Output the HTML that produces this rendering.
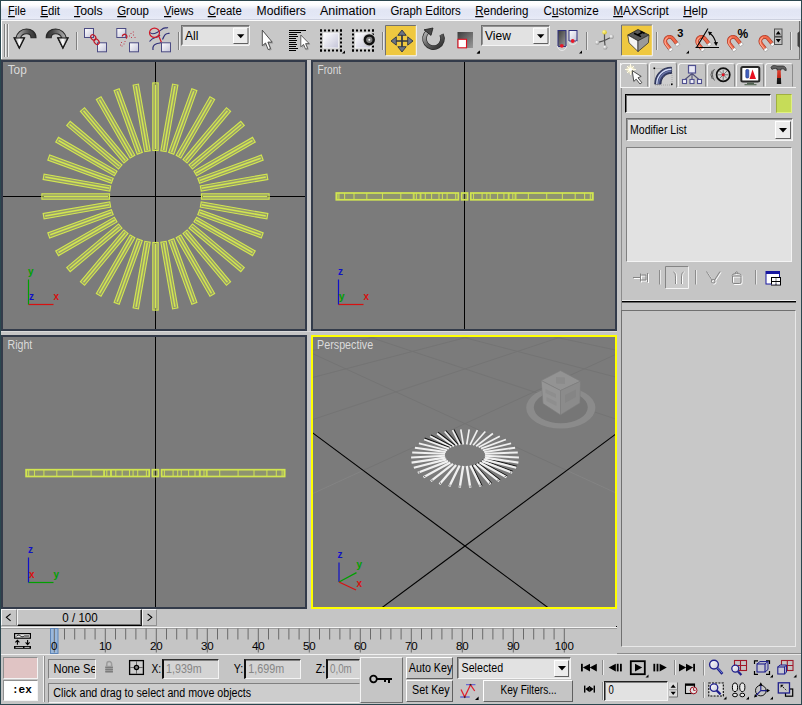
<!DOCTYPE html><html><head><meta charset="utf-8"><title>3ds Max</title><style>
*{box-sizing:border-box;margin:0;padding:0}
html,body{width:802px;height:705px;overflow:hidden;background:#c5c5c5;font-family:"Liberation Sans",sans-serif;font-size:11px;color:#000}
.a{position:absolute}
svg{position:absolute;overflow:visible}
.vp{position:absolute;background:#7b7b7b;border:2px solid #333b4a}
.vp svg{left:0;top:0}
.lbl{position:absolute;left:5px;top:2px;color:#d8d8d8;font-size:11px}
.btn{position:absolute;border:1px solid;border-color:#fff #606060 #606060 #fff;background:#c5c5c5;text-align:center;white-space:nowrap;overflow:hidden}
.sunk{position:absolute;border:1px solid;border-color:#606060 #fff #fff #606060;background:#e2e2e2;white-space:nowrap;overflow:hidden}
.vs{position:absolute;width:2px;border-left:1px solid #808080;border-right:1px solid #e8e8e8}
.t{position:absolute;white-space:nowrap}
</style></head><body>
<div class="a" style="left:0;top:0;width:802px;height:1px;background:#2b474f"></div>
<div class="a" style="left:0;top:0;width:1px;height:705px;background:#2b474f"></div>
<div class="a" style="left:801px;top:0;width:1px;height:705px;background:#2b474f"></div>
<div class="a" style="left:0;top:704px;width:802px;height:1px;background:#2b474f"></div>
<div class="a" style="left:1px;top:1px;width:800px;height:18px;background:linear-gradient(#fff 0,#fcfcfe 22%,#eceff8 38%,#e2e6f4 48%,#e3e7f5 80%,#e8ebf7 100%)"></div>
<div class="a" style="left:1px;top:19px;width:800px;height:1px;background:#ccd0de"></div>
<div class="a" style="left:1px;top:20px;width:800px;height:1px;background:#fafafa"></div>
<svg width="802" height="22" style="left:0;top:0" font-family="Liberation Sans, sans-serif" font-size="12.5" fill="#000">
<text x="8.1" y="15" textLength="17.8" lengthAdjust="spacingAndGlyphs"><tspan text-decoration="underline">F</tspan>ile</text>
<text x="40.4" y="15" textLength="19.6" lengthAdjust="spacingAndGlyphs"><tspan text-decoration="underline">E</tspan>dit</text>
<text x="74" y="15" textLength="28.7" lengthAdjust="spacingAndGlyphs"><tspan text-decoration="underline">T</tspan>ools</text>
<text x="117.2" y="15" textLength="31.8" lengthAdjust="spacingAndGlyphs"><tspan text-decoration="underline">G</tspan>roup</text>
<text x="164" y="15" textLength="29.6" lengthAdjust="spacingAndGlyphs"><tspan text-decoration="underline">V</tspan>iews</text>
<text x="207.7" y="15" textLength="34.0" lengthAdjust="spacingAndGlyphs"><tspan text-decoration="underline">C</tspan>reate</text>
<text x="256.6" y="15" textLength="49.3" lengthAdjust="spacingAndGlyphs">Modifiers</text>
<text x="320" y="15" textLength="55.6" lengthAdjust="spacingAndGlyphs">Animation</text>
<text x="390.4" y="15" textLength="70.4" lengthAdjust="spacingAndGlyphs">Graph Editors</text>
<text x="475.2" y="15" textLength="53.2" lengthAdjust="spacingAndGlyphs"><tspan text-decoration="underline">R</tspan>endering</text>
<text x="543.5" y="15" textLength="55.2" lengthAdjust="spacingAndGlyphs">C<tspan text-decoration="underline">u</tspan>stomize</text>
<text x="613.2" y="15" textLength="55.6" lengthAdjust="spacingAndGlyphs"><tspan text-decoration="underline">M</tspan>AXScript</text>
<text x="683.2" y="15" textLength="24.3" lengthAdjust="spacingAndGlyphs"><tspan text-decoration="underline">H</tspan>elp</text>
</svg>
<div class="a" style="left:1px;top:21px;width:800px;height:38px;background:#c8c8c8"></div>
<div class="a" style="left:799px;top:21px;width:1px;height:39px;background:#707070"></div>
<div class="a" style="left:1px;top:20px;width:1px;height:39px;background:#fff"></div>
<div class="a" style="left:1px;top:59px;width:799px;height:1px;background:#868686"></div>
<div class="a" style="left:4px;top:24px;width:1px;height:33px;background:#808080"></div>
<div class="a" style="left:5px;top:24px;width:1px;height:33px;background:#f0f0f0"></div>
<div class="a" style="left:7px;top:24px;width:1px;height:33px;background:#808080"></div>
<div class="a" style="left:8px;top:24px;width:1px;height:33px;background:#f0f0f0"></div>
<div class="vs" style="left:76px;top:32px;height:18px"></div>
<div class="vs" style="left:178px;top:32px;height:18px"></div>
<div class="vs" style="left:382px;top:32px;height:18px"></div>
<div class="vs" style="left:586px;top:32px;height:18px"></div>
<div class="vs" style="left:656px;top:32px;height:18px"></div>
<div class="vs" style="left:790px;top:32px;height:18px"></div>
<svg width="802" height="40" viewBox="0 20 802 40" style="left:0;top:20px" font-family="Liberation Sans, sans-serif">
<defs>
<linearGradient id="gArc" x1="0" y1="0" x2="1" y2="1"><stop offset="0" stop-color="#b8b8b8"/><stop offset="0.5" stop-color="#606060"/><stop offset="1" stop-color="#2c2c2c"/></linearGradient>
<linearGradient id="gArc2" x1="0" y1="0" x2="1" y2="0"><stop offset="0" stop-color="#c0c0c0"/><stop offset="0.35" stop-color="#8a8a8a"/><stop offset="0.7" stop-color="#4a4a4a"/><stop offset="1" stop-color="#303030"/></linearGradient>
<linearGradient id="gBox" x1="0" y1="0" x2="1" y2="1"><stop offset="0" stop-color="#ffffff"/><stop offset="1" stop-color="#c4c4d8"/></linearGradient>
<linearGradient id="gDark" x1="0" y1="0" x2="1" y2="1"><stop offset="0" stop-color="#3c3c3c"/><stop offset="1" stop-color="#9a9a9a"/></linearGradient>
<linearGradient id="gHead" x1="0" y1="0" x2="1" y2="0"><stop offset="0" stop-color="#8c8c8c"/><stop offset="0.5" stop-color="#ffffff"/><stop offset="1" stop-color="#b0b0b0"/></linearGradient>
<radialGradient id="gBall" cx="0.35" cy="0.35" r="0.7"><stop offset="0" stop-color="#ffffff"/><stop offset="1" stop-color="#909090"/></radialGradient>
<radialGradient id="gBallY" cx="0.35" cy="0.35" r="0.7"><stop offset="0" stop-color="#fff8a0"/><stop offset="1" stop-color="#d8c020"/></radialGradient>
<g id="magnet">
 <path d="M-4.3 6 V-0.5 A4.3 4.3 0 0 1 4.3 -0.5 V6" fill="none" stroke="#a83828" stroke-width="3.8"/>
 <path d="M-4.3 6 V-0.5 A4.3 4.3 0 0 1 4.3 -0.5 V6" fill="none" stroke="#f06848" stroke-width="2.6"/>
 <path d="M-4.9 5.5 V0 A4.9 4.9 0 0 1 1 -4.6" fill="none" stroke="#ffb098" stroke-width="1"/>
 <rect x="-6.1" y="5.6" width="3.6" height="2.6" fill="#fff" stroke="#909090" stroke-width="0.5"/>
 <rect x="2.5" y="5.6" width="3.6" height="2.6" fill="#fff" stroke="#909090" stroke-width="0.5"/>
</g>
<path id="fly" d="M0 3 L3 0 V3 Z" fill="#000"/>
<g id="sqbox"><rect x="0.5" y="0.5" width="9" height="9" fill="url(#gBox)" stroke="#4c4c84" stroke-width="1"/></g>
</defs>

<!-- undo -->
<path d="M36 37.7 C36 32 31.5 29 26.5 29 C21 29 17 33 16 37.7 L14 37.7 L19.3 48.3 L24.6 37.7 L20.6 37.7 C21.4 35.4 23.6 33.8 26.5 33.8 C29.2 33.8 31 35.2 31 37.7 Z" fill="url(#gArc2)" stroke="#282828" stroke-width="1.1"/>
<path d="M14.4 38 L19.3 47.8 L24.2 38 Z" fill="url(#gHead)" stroke="#181818" stroke-width="1.2"/>
<!-- redo -->
<g transform="translate(82.2 0) scale(-1 1)">
<path d="M36 37.7 C36 32 31.5 29 26.5 29 C21 29 17 33 16 37.7 L14 37.7 L19.3 48.3 L24.6 37.7 L20.6 37.7 C21.4 35.4 23.6 33.8 26.5 33.8 C29.2 33.8 31 35.2 31 37.7 Z" fill="url(#gArc2)" stroke="#282828" stroke-width="1.1"/>
<path d="M14.4 38 L19.3 47.8 L24.2 38 Z" fill="url(#gHead)" stroke="#181818" stroke-width="1.2"/>
</g>
<!-- link -->
<use href="#sqbox" x="84" y="28"/><use href="#sqbox" x="97" y="42.3"/>
<ellipse cx="93.3" cy="37.4" rx="2.2" ry="3" transform="rotate(-40 93.3 37.4)" fill="none" stroke="#c01828" stroke-width="1.2"/>
<ellipse cx="96.6" cy="41.8" rx="2.2" ry="3" transform="rotate(-40 96.6 41.8)" fill="none" stroke="#c01828" stroke-width="1.2"/>
<!-- unlink -->
<use href="#sqbox" x="116.3" y="28"/><use href="#sqbox" x="129" y="42.3"/>
<path d="M122.3 36.5 A2.3 2.3 0 1 1 126 38.4" fill="none" stroke="#c01828" stroke-width="1.3"/>
<g fill="#c04050"><rect x="130.5" y="33" width="1" height="1"/><rect x="133" y="34.5" width="1" height="1"/><rect x="131" y="37" width="1" height="1"/><rect x="134.5" y="37" width="1" height="1"/><rect x="129" y="35.5" width="1" height="1"/><rect x="132.8" y="31.5" width="1" height="1"/>
<rect x="121" y="42" width="1" height="1"/><rect x="123.5" y="43.5" width="1" height="1"/><rect x="121.5" y="45.5" width="1" height="1"/><rect x="124.5" y="41" width="1" height="1"/><rect x="120" y="44.5" width="1" height="1"/></g>
<!-- bind space warp -->
<g fill="none" stroke="#303078" stroke-width="1.2">
<path d="M150 32.5 C152 35 155 33.5 157 32.5 C160 31 161 30 163 28.5 C165 27 166.5 28.5 168 27.5"/>
<path d="M149.5 41.5 C151 39.5 153 38 155.5 37.5 C158 37 159 36 160 35 M162.5 39.5 C164 37 164 35 166 34 C167.5 33.2 168.5 33.8 169.5 33"/>
<path d="M153 50 C152.5 47 153.5 45 156 44 C158.5 43 159.5 43.5 161 42.5"/>
</g>
<ellipse cx="154.5" cy="32.8" rx="5" ry="4.6" fill="none" stroke="#d01828" stroke-width="1.2"/>
<path d="M158.5 35.5 L161.5 42.5" stroke="#d01828" stroke-width="1.2"/>
<use href="#sqbox" x="161" y="42.3"/>

<!-- All dropdown -->
<rect x="181.5" y="25.5" width="68" height="20" fill="#e2e2e2" stroke="#707070"/>
<path d="M182.5 44.5 V26.5 H249" fill="none" stroke="#909090"/>
<path d="M181.5 45.5 H249.5 V25.5" fill="none" stroke="#f4f4f4"/>
<rect x="233.5" y="28" width="14.5" height="15.5" fill="#ececec"/>
<path d="M233.5 43.5 V28 H248" fill="none" stroke="#fff"/><path d="M233.5 43.5 H248 V28" fill="none" stroke="#606060"/>
<path d="M237 34.3 h7.4 l-3.7 4 z" fill="#000"/>
<text x="185" y="39.6" font-size="12">All</text>

<!-- select arrow -->
<path d="M263.6 31.5 V47 L266.8 44.2 L269.4 50.8 L271.8 49.8 L269.2 43.4 L273.4 43.4 Z" fill="#8c8c8c" opacity="0.75"/>
<path d="M262.3 30.2 V45.8 L265.5 43 L268.2 49.6 L270.5 48.6 L267.9 42.1 L272.2 42.1 Z" fill="#fff" stroke="#404040" stroke-width="0.9" stroke-linejoin="round"/>
<!-- select by name -->
<g stroke="#000" stroke-width="1">
<path d="M289 30.5h17M289 32.5h12M289 34.5h8M289 36.5h9M289 38.5h7M289 40.5h8M289 42.5h7M289 44.5h8M289 46.5h7M289 48.5h9M289 50.5h7"/>
</g>
<path d="M302 36.5 V48 L304.8 45.6 L306.8 50.4 L308.8 49.6 L306.8 44.8 L310.4 44.8 Z" fill="#909090" opacity="0.7"/>
<path d="M300.8 35 V46.8 L303.6 44.4 L305.6 49.2 L307.6 48.4 L305.6 43.6 L309.2 43.6 Z" fill="#fff" stroke="#404040" stroke-width="0.8" stroke-linejoin="round"/>
<!-- rect region -->
<g stroke="#000" stroke-width="2" stroke-dasharray="2 2" fill="none"><path d="M320 30.5 H342"/><path d="M320 50.5 H342"/><path d="M321 29.5 V51.5"/><path d="M341 29.5 V51.5"/></g>
<rect x="323.5" y="33" width="15" height="15" fill="url(#gBox)" stroke="#f8f8f8" stroke-width="0.8"/>
<use href="#fly" x="342" y="50.5"/>
<!-- window/crossing -->
<g stroke="#000" stroke-width="2" stroke-dasharray="2 2" fill="none"><path d="M352 30.5 H374"/><path d="M352 50.5 H374"/><path d="M353 29.5 V51.5"/><path d="M373 29.5 V51.5"/></g>
<rect x="355.5" y="33" width="15" height="15" fill="url(#gBox)" stroke="#f8f8f8" stroke-width="0.8"/>
<circle cx="369.3" cy="39.8" r="6.6" fill="#c8c8c8"/>
<circle cx="369.3" cy="39.8" r="4.4" fill="#808080" stroke="#101010" stroke-width="2.5"/>
<circle cx="369.3" cy="39.8" r="1" fill="#fff"/>

<!-- move (active) -->
<rect x="386" y="26" width="30" height="29.5" fill="#efc840"/>
<path d="M385.5 55.5 V25.5 H416" fill="none" stroke="#707070"/><path d="M385.5 55.8 H416.3 V25.5" fill="none" stroke="#f8f8f8"/>
<g stroke="#2e3442">
<path d="M394 41 H410 M402 33 V49" stroke-width="1.7" fill="none"/>
<path d="M402 30 L406.2 35.3 H397.8 Z M402 52 L406.2 46.7 H397.8 Z M391 41 L396.3 36.8 V45.2 Z M413 41 L407.7 36.8 V45.2 Z" stroke-width="0.9" fill="#6c7484"/>
</g>
<!-- rotate -->
<path d="M428 31.5 A9 9 0 1 0 441.5 34.5" fill="none" stroke="#2c2c2c" stroke-width="4.6"/>
<path d="M428 31.5 A9 9 0 1 0 441.5 34.5" fill="none" stroke="url(#gArc)" stroke-width="3.2"/>
<path d="M424 29.8 L433 28 L431 35.4 Z" fill="#484848" stroke="#202020" stroke-width="0.8"/>
<!-- scale -->
<rect x="457.5" y="32" width="15.5" height="16" fill="url(#gDark)"/>
<rect x="458" y="39.3" width="8.5" height="8.5" fill="#fff" stroke="#e01020" stroke-width="1.1"/>
<use href="#fly" x="476.5" y="50.5"/>
<!-- View dropdown -->
<rect x="481.5" y="25.5" width="68" height="20" fill="#e2e2e2" stroke="#707070"/>
<path d="M482.5 44.5 V26.5 H549" fill="none" stroke="#909090"/>
<path d="M481.5 45.5 H549.5 V25.5" fill="none" stroke="#f4f4f4"/>
<rect x="533.5" y="28" width="14.5" height="15.5" fill="#ececec"/>
<path d="M533.5 43.5 V28 H548" fill="none" stroke="#fff"/><path d="M533.5 43.5 H548 V28" fill="none" stroke="#606060"/>
<path d="M537 34.3 h7.4 l-3.7 4 z" fill="#000"/>
<text x="485" y="39.6" font-size="12">View</text>
<use href="#fly" x="477" y="50.5" transform="translate(0 0)"/>
<!-- pivot -->
<rect x="558" y="30.5" width="8" height="16" fill="url(#gDark)" stroke="#30307c" stroke-width="1"/>
<rect x="569" y="30.5" width="8" height="10.5" fill="url(#gBox)" stroke="#30307c" stroke-width="1"/>
<path d="M557.5 46 A4.3 4.3 0 0 0 566.5 46" fill="none" stroke="#e8e8e8" stroke-width="1"/>
<path d="M568.5 41 A4.3 4.3 0 0 0 577 41" fill="none" stroke="#e8e8e8" stroke-width="1"/>
<circle cx="561.8" cy="45.8" r="1.9" fill="#e81828"/><circle cx="572.7" cy="41" r="1.9" fill="#e81828"/>
<use href="#fly" x="579" y="50.5"/>
<!-- manipulate -->
<g stroke="#505050" stroke-width="1.2"><path d="M604.5 40.5 V33 M604.5 40.5 L611.5 37 M604.5 40.5 L597.5 42.6 M604.5 40.5 L605.2 47"/></g>
<circle cx="604.5" cy="32.3" r="2.3" fill="url(#gBallY)"/><circle cx="611.6" cy="36.8" r="2.2" fill="url(#gBall)"/><circle cx="597.3" cy="42.6" r="2.2" fill="url(#gBall)"/><circle cx="605.2" cy="47.4" r="2.2" fill="url(#gBall)"/>
<!-- keyboard override (active) -->
<rect x="622" y="25.5" width="30" height="30" fill="#efc840"/>
<path d="M621.5 55.5 V25 H652" fill="none" stroke="#707070"/><path d="M621.5 55.8 H652.3 V25" fill="none" stroke="#f8f8f8"/>
<polygon points="627.8,35 638,29.5 649,35 638,40.8" fill="#585858" stroke="#202020" stroke-width="0.8"/>
<polygon points="627.8,35 638,40.8 638,51.5 629,42.8" fill="#f4f4f4" stroke="#303030" stroke-width="0.8"/>
<polygon points="638,40.8 649,35 648.4,42.8 638,51.5" fill="#9a9a9a" stroke="#303030" stroke-width="0.8"/>
<path d="M634 33.2 L641 36.6 M637.6 35 L642.5 32.4 M640.5 31.4 L644.5 33.4" stroke="#000" stroke-width="1.6" fill="none"/>
<!-- snaps -->
<use href="#magnet" transform="translate(669.8 41.6) rotate(-38)"/>
<text x="677.3" y="37.2" font-size="11" font-weight="bold">3</text>
<use href="#fly" x="686" y="50.5"/>
<use href="#magnet" transform="translate(701.8 41.6) rotate(-38)"/>
<path d="M695.5 47.5 H719 M696.5 47.5 L708 28.5" stroke="#000" stroke-width="1.1" fill="none"/>
<path d="M709.5 33 Q715 37 716 44" stroke="#000" stroke-width="1.1" fill="none"/>
<path d="M708 31.5 L712.2 32.2 L709.5 35.5 Z M716.2 46 L713.8 42.2 L718 42 Z" fill="#000"/>
<use href="#magnet" transform="translate(733.4 41.6) rotate(-38)"/>
<text x="737.5" y="38.4" font-size="12" font-weight="bold">%</text>
<use href="#magnet" transform="translate(765 41.6) rotate(-38)"/>
<rect x="774" y="28.5" width="8.5" height="16.5" fill="#505050"/>
<rect x="775" y="29.5" width="6.5" height="6.3" fill="#c4c4c4"/><rect x="775" y="37.6" width="6.5" height="6.4" fill="#c4c4c4"/>
<path d="M775.7 34.5 L778.3 31 L780.9 34.5 Z M775.7 39 L778.3 42.5 L780.9 39 Z" fill="#000"/>
<path d="M797.5 33 L800 31 V48 L797.5 46" fill="#404040"/>
</svg>

<div class="vp" style="left:1px;top:60px;width:306px;height:271px"><svg width="302" height="267">
<line x1="0" y1="134.5" x2="302" y2="134.5" stroke="#000" stroke-width="1"/><line x1="152.5" y1="0" x2="152.5" y2="267" stroke="#000" stroke-width="1"/>
<g transform="rotate(0 152.5 134.5)"><rect x="149.8" y="20.900000000000006" width="5.4" height="67.6" fill="#d0e64e" fill-opacity="0.3" stroke="#d2e650" stroke-width="1.15"/><line x1="152.5" y1="22.5" x2="152.5" y2="87.5" stroke="#d2e650" stroke-width="1.5"/></g><g transform="rotate(10 152.5 134.5)"><rect x="149.8" y="20.900000000000006" width="5.4" height="67.6" fill="#d0e64e" fill-opacity="0.3" stroke="#d2e650" stroke-width="1.15"/><line x1="152.5" y1="22.5" x2="152.5" y2="87.5" stroke="#d2e650" stroke-width="1.5"/></g><g transform="rotate(20 152.5 134.5)"><rect x="149.8" y="20.900000000000006" width="5.4" height="67.6" fill="#d0e64e" fill-opacity="0.3" stroke="#d2e650" stroke-width="1.15"/><line x1="152.5" y1="22.5" x2="152.5" y2="87.5" stroke="#d2e650" stroke-width="1.5"/></g><g transform="rotate(30 152.5 134.5)"><rect x="149.8" y="20.900000000000006" width="5.4" height="67.6" fill="#d0e64e" fill-opacity="0.3" stroke="#d2e650" stroke-width="1.15"/><line x1="152.5" y1="22.5" x2="152.5" y2="87.5" stroke="#d2e650" stroke-width="1.5"/></g><g transform="rotate(40 152.5 134.5)"><rect x="149.8" y="20.900000000000006" width="5.4" height="67.6" fill="#d0e64e" fill-opacity="0.3" stroke="#d2e650" stroke-width="1.15"/><line x1="152.5" y1="22.5" x2="152.5" y2="87.5" stroke="#d2e650" stroke-width="1.5"/></g><g transform="rotate(50 152.5 134.5)"><rect x="149.8" y="20.900000000000006" width="5.4" height="67.6" fill="#d0e64e" fill-opacity="0.3" stroke="#d2e650" stroke-width="1.15"/><line x1="152.5" y1="22.5" x2="152.5" y2="87.5" stroke="#d2e650" stroke-width="1.5"/></g><g transform="rotate(60 152.5 134.5)"><rect x="149.8" y="20.900000000000006" width="5.4" height="67.6" fill="#d0e64e" fill-opacity="0.3" stroke="#d2e650" stroke-width="1.15"/><line x1="152.5" y1="22.5" x2="152.5" y2="87.5" stroke="#d2e650" stroke-width="1.5"/></g><g transform="rotate(70 152.5 134.5)"><rect x="149.8" y="20.900000000000006" width="5.4" height="67.6" fill="#d0e64e" fill-opacity="0.3" stroke="#d2e650" stroke-width="1.15"/><line x1="152.5" y1="22.5" x2="152.5" y2="87.5" stroke="#d2e650" stroke-width="1.5"/></g><g transform="rotate(80 152.5 134.5)"><rect x="149.8" y="20.900000000000006" width="5.4" height="67.6" fill="#d0e64e" fill-opacity="0.3" stroke="#d2e650" stroke-width="1.15"/><line x1="152.5" y1="22.5" x2="152.5" y2="87.5" stroke="#d2e650" stroke-width="1.5"/></g><g transform="rotate(90 152.5 134.5)"><rect x="149.8" y="20.900000000000006" width="5.4" height="67.6" fill="#d0e64e" fill-opacity="0.3" stroke="#d2e650" stroke-width="1.15"/><line x1="152.5" y1="22.5" x2="152.5" y2="87.5" stroke="#d2e650" stroke-width="1.5"/></g><g transform="rotate(100 152.5 134.5)"><rect x="149.8" y="20.900000000000006" width="5.4" height="67.6" fill="#d0e64e" fill-opacity="0.3" stroke="#d2e650" stroke-width="1.15"/><line x1="152.5" y1="22.5" x2="152.5" y2="87.5" stroke="#d2e650" stroke-width="1.5"/></g><g transform="rotate(110 152.5 134.5)"><rect x="149.8" y="20.900000000000006" width="5.4" height="67.6" fill="#d0e64e" fill-opacity="0.3" stroke="#d2e650" stroke-width="1.15"/><line x1="152.5" y1="22.5" x2="152.5" y2="87.5" stroke="#d2e650" stroke-width="1.5"/></g><g transform="rotate(120 152.5 134.5)"><rect x="149.8" y="20.900000000000006" width="5.4" height="67.6" fill="#d0e64e" fill-opacity="0.3" stroke="#d2e650" stroke-width="1.15"/><line x1="152.5" y1="22.5" x2="152.5" y2="87.5" stroke="#d2e650" stroke-width="1.5"/></g><g transform="rotate(130 152.5 134.5)"><rect x="149.8" y="20.900000000000006" width="5.4" height="67.6" fill="#d0e64e" fill-opacity="0.3" stroke="#d2e650" stroke-width="1.15"/><line x1="152.5" y1="22.5" x2="152.5" y2="87.5" stroke="#d2e650" stroke-width="1.5"/></g><g transform="rotate(140 152.5 134.5)"><rect x="149.8" y="20.900000000000006" width="5.4" height="67.6" fill="#d0e64e" fill-opacity="0.3" stroke="#d2e650" stroke-width="1.15"/><line x1="152.5" y1="22.5" x2="152.5" y2="87.5" stroke="#d2e650" stroke-width="1.5"/></g><g transform="rotate(150 152.5 134.5)"><rect x="149.8" y="20.900000000000006" width="5.4" height="67.6" fill="#d0e64e" fill-opacity="0.3" stroke="#d2e650" stroke-width="1.15"/><line x1="152.5" y1="22.5" x2="152.5" y2="87.5" stroke="#d2e650" stroke-width="1.5"/></g><g transform="rotate(160 152.5 134.5)"><rect x="149.8" y="20.900000000000006" width="5.4" height="67.6" fill="#d0e64e" fill-opacity="0.3" stroke="#d2e650" stroke-width="1.15"/><line x1="152.5" y1="22.5" x2="152.5" y2="87.5" stroke="#d2e650" stroke-width="1.5"/></g><g transform="rotate(170 152.5 134.5)"><rect x="149.8" y="20.900000000000006" width="5.4" height="67.6" fill="#d0e64e" fill-opacity="0.3" stroke="#d2e650" stroke-width="1.15"/><line x1="152.5" y1="22.5" x2="152.5" y2="87.5" stroke="#d2e650" stroke-width="1.5"/></g><g transform="rotate(180 152.5 134.5)"><rect x="149.8" y="20.900000000000006" width="5.4" height="67.6" fill="#d0e64e" fill-opacity="0.3" stroke="#d2e650" stroke-width="1.15"/><line x1="152.5" y1="22.5" x2="152.5" y2="87.5" stroke="#d2e650" stroke-width="1.5"/></g><g transform="rotate(190 152.5 134.5)"><rect x="149.8" y="20.900000000000006" width="5.4" height="67.6" fill="#d0e64e" fill-opacity="0.3" stroke="#d2e650" stroke-width="1.15"/><line x1="152.5" y1="22.5" x2="152.5" y2="87.5" stroke="#d2e650" stroke-width="1.5"/></g><g transform="rotate(200 152.5 134.5)"><rect x="149.8" y="20.900000000000006" width="5.4" height="67.6" fill="#d0e64e" fill-opacity="0.3" stroke="#d2e650" stroke-width="1.15"/><line x1="152.5" y1="22.5" x2="152.5" y2="87.5" stroke="#d2e650" stroke-width="1.5"/></g><g transform="rotate(210 152.5 134.5)"><rect x="149.8" y="20.900000000000006" width="5.4" height="67.6" fill="#d0e64e" fill-opacity="0.3" stroke="#d2e650" stroke-width="1.15"/><line x1="152.5" y1="22.5" x2="152.5" y2="87.5" stroke="#d2e650" stroke-width="1.5"/></g><g transform="rotate(220 152.5 134.5)"><rect x="149.8" y="20.900000000000006" width="5.4" height="67.6" fill="#d0e64e" fill-opacity="0.3" stroke="#d2e650" stroke-width="1.15"/><line x1="152.5" y1="22.5" x2="152.5" y2="87.5" stroke="#d2e650" stroke-width="1.5"/></g><g transform="rotate(230 152.5 134.5)"><rect x="149.8" y="20.900000000000006" width="5.4" height="67.6" fill="#d0e64e" fill-opacity="0.3" stroke="#d2e650" stroke-width="1.15"/><line x1="152.5" y1="22.5" x2="152.5" y2="87.5" stroke="#d2e650" stroke-width="1.5"/></g><g transform="rotate(240 152.5 134.5)"><rect x="149.8" y="20.900000000000006" width="5.4" height="67.6" fill="#d0e64e" fill-opacity="0.3" stroke="#d2e650" stroke-width="1.15"/><line x1="152.5" y1="22.5" x2="152.5" y2="87.5" stroke="#d2e650" stroke-width="1.5"/></g><g transform="rotate(250 152.5 134.5)"><rect x="149.8" y="20.900000000000006" width="5.4" height="67.6" fill="#d0e64e" fill-opacity="0.3" stroke="#d2e650" stroke-width="1.15"/><line x1="152.5" y1="22.5" x2="152.5" y2="87.5" stroke="#d2e650" stroke-width="1.5"/></g><g transform="rotate(260 152.5 134.5)"><rect x="149.8" y="20.900000000000006" width="5.4" height="67.6" fill="#d0e64e" fill-opacity="0.3" stroke="#d2e650" stroke-width="1.15"/><line x1="152.5" y1="22.5" x2="152.5" y2="87.5" stroke="#d2e650" stroke-width="1.5"/></g><g transform="rotate(270 152.5 134.5)"><rect x="149.8" y="20.900000000000006" width="5.4" height="67.6" fill="#d0e64e" fill-opacity="0.3" stroke="#d2e650" stroke-width="1.15"/><line x1="152.5" y1="22.5" x2="152.5" y2="87.5" stroke="#d2e650" stroke-width="1.5"/></g><g transform="rotate(280 152.5 134.5)"><rect x="149.8" y="20.900000000000006" width="5.4" height="67.6" fill="#d0e64e" fill-opacity="0.3" stroke="#d2e650" stroke-width="1.15"/><line x1="152.5" y1="22.5" x2="152.5" y2="87.5" stroke="#d2e650" stroke-width="1.5"/></g><g transform="rotate(290 152.5 134.5)"><rect x="149.8" y="20.900000000000006" width="5.4" height="67.6" fill="#d0e64e" fill-opacity="0.3" stroke="#d2e650" stroke-width="1.15"/><line x1="152.5" y1="22.5" x2="152.5" y2="87.5" stroke="#d2e650" stroke-width="1.5"/></g><g transform="rotate(300 152.5 134.5)"><rect x="149.8" y="20.900000000000006" width="5.4" height="67.6" fill="#d0e64e" fill-opacity="0.3" stroke="#d2e650" stroke-width="1.15"/><line x1="152.5" y1="22.5" x2="152.5" y2="87.5" stroke="#d2e650" stroke-width="1.5"/></g><g transform="rotate(310 152.5 134.5)"><rect x="149.8" y="20.900000000000006" width="5.4" height="67.6" fill="#d0e64e" fill-opacity="0.3" stroke="#d2e650" stroke-width="1.15"/><line x1="152.5" y1="22.5" x2="152.5" y2="87.5" stroke="#d2e650" stroke-width="1.5"/></g><g transform="rotate(320 152.5 134.5)"><rect x="149.8" y="20.900000000000006" width="5.4" height="67.6" fill="#d0e64e" fill-opacity="0.3" stroke="#d2e650" stroke-width="1.15"/><line x1="152.5" y1="22.5" x2="152.5" y2="87.5" stroke="#d2e650" stroke-width="1.5"/></g><g transform="rotate(330 152.5 134.5)"><rect x="149.8" y="20.900000000000006" width="5.4" height="67.6" fill="#d0e64e" fill-opacity="0.3" stroke="#d2e650" stroke-width="1.15"/><line x1="152.5" y1="22.5" x2="152.5" y2="87.5" stroke="#d2e650" stroke-width="1.5"/></g><g transform="rotate(340 152.5 134.5)"><rect x="149.8" y="20.900000000000006" width="5.4" height="67.6" fill="#d0e64e" fill-opacity="0.3" stroke="#d2e650" stroke-width="1.15"/><line x1="152.5" y1="22.5" x2="152.5" y2="87.5" stroke="#d2e650" stroke-width="1.5"/></g><g transform="rotate(350 152.5 134.5)"><rect x="149.8" y="20.900000000000006" width="5.4" height="67.6" fill="#d0e64e" fill-opacity="0.3" stroke="#d2e650" stroke-width="1.15"/><line x1="152.5" y1="22.5" x2="152.5" y2="87.5" stroke="#d2e650" stroke-width="1.5"/></g>
<line x1="25.5" y1="242.5" x2="50.5" y2="242.5" stroke="#d81010" stroke-width="1.2"/><line x1="25.5" y1="242.5" x2="25.5" y2="217.5" stroke="#00a000" stroke-width="1.2"/><g font-size="10" font-weight="bold" font-family="Liberation Sans, sans-serif"><text x="25.0" y="213.0" fill="#00a000">y</text><text x="26.0" y="238.0" fill="#1010c8">z</text><text x="50.5" y="238.0" fill="#d81010">x</text></g>
</svg></div>
<div class="vp" style="left:311px;top:60px;width:306px;height:271px"><svg width="302" height="267">
<line x1="151.5" y1="0" x2="151.5" y2="267" stroke="#000" stroke-width="1"/>
<rect x="23.3" y="131.0" width="122.1" height="6.8" fill="#c3d455" fill-opacity="0.28" stroke="#d2e650" stroke-width="1.7"/><rect x="148.6" y="131.0" width="6.0" height="6.8" fill="#c3d455" fill-opacity="0.28" stroke="#d2e650" stroke-width="1.7"/><rect x="157.8" y="131.0" width="122.1" height="6.8" fill="#c3d455" fill-opacity="0.28" stroke="#d2e650" stroke-width="1.7"/><line x1="23.9" y1="131.0" x2="23.9" y2="137.8" stroke="#d2e650" stroke-width="1.1" stroke-opacity="0.9"/><line x1="25.9" y1="131.0" x2="25.9" y2="137.8" stroke="#d2e650" stroke-width="1.1" stroke-opacity="0.9"/><line x1="31.6" y1="131.0" x2="31.6" y2="137.8" stroke="#d2e650" stroke-width="1.1" stroke-opacity="0.9"/><line x1="41.0" y1="131.0" x2="41.0" y2="137.8" stroke="#d2e650" stroke-width="1.1" stroke-opacity="0.9"/><line x1="53.8" y1="131.0" x2="53.8" y2="137.8" stroke="#d2e650" stroke-width="1.1" stroke-opacity="0.9"/><line x1="69.5" y1="131.0" x2="69.5" y2="137.8" stroke="#d2e650" stroke-width="1.1" stroke-opacity="0.9"/><line x1="87.8" y1="131.0" x2="87.8" y2="137.8" stroke="#d2e650" stroke-width="1.1" stroke-opacity="0.9"/><line x1="100.3" y1="131.0" x2="100.3" y2="137.8" stroke="#d2e650" stroke-width="1.1" stroke-opacity="0.9"/><line x1="101.1" y1="131.0" x2="101.1" y2="137.8" stroke="#d2e650" stroke-width="1.1" stroke-opacity="0.9"/><line x1="103.4" y1="131.0" x2="103.4" y2="137.8" stroke="#d2e650" stroke-width="1.1" stroke-opacity="0.9"/><line x1="107.2" y1="131.0" x2="107.2" y2="137.8" stroke="#d2e650" stroke-width="1.1" stroke-opacity="0.9"/><line x1="107.9" y1="131.0" x2="107.9" y2="137.8" stroke="#d2e650" stroke-width="1.1" stroke-opacity="0.9"/><line x1="112.3" y1="131.0" x2="112.3" y2="137.8" stroke="#d2e650" stroke-width="1.1" stroke-opacity="0.9"/><line x1="118.6" y1="131.0" x2="118.6" y2="137.8" stroke="#d2e650" stroke-width="1.1" stroke-opacity="0.9"/><line x1="126.0" y1="131.0" x2="126.0" y2="137.8" stroke="#d2e650" stroke-width="1.1" stroke-opacity="0.9"/><line x1="129.4" y1="131.0" x2="129.4" y2="137.8" stroke="#d2e650" stroke-width="1.1" stroke-opacity="0.9"/><line x1="134.1" y1="131.0" x2="134.1" y2="137.8" stroke="#d2e650" stroke-width="1.1" stroke-opacity="0.9"/><line x1="142.7" y1="131.0" x2="142.7" y2="137.8" stroke="#d2e650" stroke-width="1.1" stroke-opacity="0.9"/><line x1="160.5" y1="131.0" x2="160.5" y2="137.8" stroke="#d2e650" stroke-width="1.1" stroke-opacity="0.9"/><line x1="169.1" y1="131.0" x2="169.1" y2="137.8" stroke="#d2e650" stroke-width="1.1" stroke-opacity="0.9"/><line x1="173.8" y1="131.0" x2="173.8" y2="137.8" stroke="#d2e650" stroke-width="1.1" stroke-opacity="0.9"/><line x1="177.2" y1="131.0" x2="177.2" y2="137.8" stroke="#d2e650" stroke-width="1.1" stroke-opacity="0.9"/><line x1="184.6" y1="131.0" x2="184.6" y2="137.8" stroke="#d2e650" stroke-width="1.1" stroke-opacity="0.9"/><line x1="190.9" y1="131.0" x2="190.9" y2="137.8" stroke="#d2e650" stroke-width="1.1" stroke-opacity="0.9"/><line x1="195.3" y1="131.0" x2="195.3" y2="137.8" stroke="#d2e650" stroke-width="1.1" stroke-opacity="0.9"/><line x1="196.0" y1="131.0" x2="196.0" y2="137.8" stroke="#d2e650" stroke-width="1.1" stroke-opacity="0.9"/><line x1="199.8" y1="131.0" x2="199.8" y2="137.8" stroke="#d2e650" stroke-width="1.1" stroke-opacity="0.9"/><line x1="202.1" y1="131.0" x2="202.1" y2="137.8" stroke="#d2e650" stroke-width="1.1" stroke-opacity="0.9"/><line x1="202.9" y1="131.0" x2="202.9" y2="137.8" stroke="#d2e650" stroke-width="1.1" stroke-opacity="0.9"/><line x1="215.4" y1="131.0" x2="215.4" y2="137.8" stroke="#d2e650" stroke-width="1.1" stroke-opacity="0.9"/><line x1="233.7" y1="131.0" x2="233.7" y2="137.8" stroke="#d2e650" stroke-width="1.1" stroke-opacity="0.9"/><line x1="249.4" y1="131.0" x2="249.4" y2="137.8" stroke="#d2e650" stroke-width="1.1" stroke-opacity="0.9"/><line x1="262.2" y1="131.0" x2="262.2" y2="137.8" stroke="#d2e650" stroke-width="1.1" stroke-opacity="0.9"/><line x1="271.6" y1="131.0" x2="271.6" y2="137.8" stroke="#d2e650" stroke-width="1.1" stroke-opacity="0.9"/><line x1="277.3" y1="131.0" x2="277.3" y2="137.8" stroke="#d2e650" stroke-width="1.1" stroke-opacity="0.9"/><line x1="279.3" y1="131.0" x2="279.3" y2="137.8" stroke="#d2e650" stroke-width="1.1" stroke-opacity="0.9"/>
<line x1="25.5" y1="242.5" x2="50.5" y2="242.5" stroke="#d81010" stroke-width="1.2"/><line x1="25.5" y1="242.5" x2="25.5" y2="217.5" stroke="#1010c8" stroke-width="1.2"/><g font-size="10" font-weight="bold" font-family="Liberation Sans, sans-serif"><text x="25.0" y="213.0" fill="#1010c8">z</text><text x="26.0" y="238.0" fill="#00a000">y</text><text x="50.5" y="238.0" fill="#d81010">x</text></g>
</svg></div>
<div class="vp" style="left:1px;top:335px;width:306px;height:274px"><svg width="302" height="270">
<line x1="152.5" y1="0" x2="152.5" y2="270" stroke="#000" stroke-width="1"/>
<rect x="23.1" y="132.7" width="123.1" height="6.8" fill="#c3d455" fill-opacity="0.28" stroke="#d2e650" stroke-width="1.7"/><rect x="149.4" y="132.7" width="6.0" height="6.8" fill="#c3d455" fill-opacity="0.28" stroke="#d2e650" stroke-width="1.7"/><rect x="158.6" y="132.7" width="123.1" height="6.8" fill="#c3d455" fill-opacity="0.28" stroke="#d2e650" stroke-width="1.7"/><line x1="23.7" y1="132.70000000000002" x2="23.7" y2="139.50000000000003" stroke="#d2e650" stroke-width="1.1" stroke-opacity="0.9"/><line x1="25.7" y1="132.70000000000002" x2="25.7" y2="139.50000000000003" stroke="#d2e650" stroke-width="1.1" stroke-opacity="0.9"/><line x1="31.5" y1="132.70000000000002" x2="31.5" y2="139.50000000000003" stroke="#d2e650" stroke-width="1.1" stroke-opacity="0.9"/><line x1="40.9" y1="132.70000000000002" x2="40.9" y2="139.50000000000003" stroke="#d2e650" stroke-width="1.1" stroke-opacity="0.9"/><line x1="53.8" y1="132.70000000000002" x2="53.8" y2="139.50000000000003" stroke="#d2e650" stroke-width="1.1" stroke-opacity="0.9"/><line x1="69.7" y1="132.70000000000002" x2="69.7" y2="139.50000000000003" stroke="#d2e650" stroke-width="1.1" stroke-opacity="0.9"/><line x1="88.1" y1="132.70000000000002" x2="88.1" y2="139.50000000000003" stroke="#d2e650" stroke-width="1.1" stroke-opacity="0.9"/><line x1="100.7" y1="132.70000000000002" x2="100.7" y2="139.50000000000003" stroke="#d2e650" stroke-width="1.1" stroke-opacity="0.9"/><line x1="101.5" y1="132.70000000000002" x2="101.5" y2="139.50000000000003" stroke="#d2e650" stroke-width="1.1" stroke-opacity="0.9"/><line x1="103.8" y1="132.70000000000002" x2="103.8" y2="139.50000000000003" stroke="#d2e650" stroke-width="1.1" stroke-opacity="0.9"/><line x1="107.6" y1="132.70000000000002" x2="107.6" y2="139.50000000000003" stroke="#d2e650" stroke-width="1.1" stroke-opacity="0.9"/><line x1="108.4" y1="132.70000000000002" x2="108.4" y2="139.50000000000003" stroke="#d2e650" stroke-width="1.1" stroke-opacity="0.9"/><line x1="112.8" y1="132.70000000000002" x2="112.8" y2="139.50000000000003" stroke="#d2e650" stroke-width="1.1" stroke-opacity="0.9"/><line x1="119.2" y1="132.70000000000002" x2="119.2" y2="139.50000000000003" stroke="#d2e650" stroke-width="1.1" stroke-opacity="0.9"/><line x1="126.5" y1="132.70000000000002" x2="126.5" y2="139.50000000000003" stroke="#d2e650" stroke-width="1.1" stroke-opacity="0.9"/><line x1="130.1" y1="132.70000000000002" x2="130.1" y2="139.50000000000003" stroke="#d2e650" stroke-width="1.1" stroke-opacity="0.9"/><line x1="134.7" y1="132.70000000000002" x2="134.7" y2="139.50000000000003" stroke="#d2e650" stroke-width="1.1" stroke-opacity="0.9"/><line x1="143.4" y1="132.70000000000002" x2="143.4" y2="139.50000000000003" stroke="#d2e650" stroke-width="1.1" stroke-opacity="0.9"/><line x1="161.4" y1="132.70000000000002" x2="161.4" y2="139.50000000000003" stroke="#d2e650" stroke-width="1.1" stroke-opacity="0.9"/><line x1="170.1" y1="132.70000000000002" x2="170.1" y2="139.50000000000003" stroke="#d2e650" stroke-width="1.1" stroke-opacity="0.9"/><line x1="174.7" y1="132.70000000000002" x2="174.7" y2="139.50000000000003" stroke="#d2e650" stroke-width="1.1" stroke-opacity="0.9"/><line x1="178.3" y1="132.70000000000002" x2="178.3" y2="139.50000000000003" stroke="#d2e650" stroke-width="1.1" stroke-opacity="0.9"/><line x1="185.6" y1="132.70000000000002" x2="185.6" y2="139.50000000000003" stroke="#d2e650" stroke-width="1.1" stroke-opacity="0.9"/><line x1="192.0" y1="132.70000000000002" x2="192.0" y2="139.50000000000003" stroke="#d2e650" stroke-width="1.1" stroke-opacity="0.9"/><line x1="196.4" y1="132.70000000000002" x2="196.4" y2="139.50000000000003" stroke="#d2e650" stroke-width="1.1" stroke-opacity="0.9"/><line x1="197.2" y1="132.70000000000002" x2="197.2" y2="139.50000000000003" stroke="#d2e650" stroke-width="1.1" stroke-opacity="0.9"/><line x1="201.0" y1="132.70000000000002" x2="201.0" y2="139.50000000000003" stroke="#d2e650" stroke-width="1.1" stroke-opacity="0.9"/><line x1="203.3" y1="132.70000000000002" x2="203.3" y2="139.50000000000003" stroke="#d2e650" stroke-width="1.1" stroke-opacity="0.9"/><line x1="204.1" y1="132.70000000000002" x2="204.1" y2="139.50000000000003" stroke="#d2e650" stroke-width="1.1" stroke-opacity="0.9"/><line x1="216.7" y1="132.70000000000002" x2="216.7" y2="139.50000000000003" stroke="#d2e650" stroke-width="1.1" stroke-opacity="0.9"/><line x1="235.1" y1="132.70000000000002" x2="235.1" y2="139.50000000000003" stroke="#d2e650" stroke-width="1.1" stroke-opacity="0.9"/><line x1="251.0" y1="132.70000000000002" x2="251.0" y2="139.50000000000003" stroke="#d2e650" stroke-width="1.1" stroke-opacity="0.9"/><line x1="263.9" y1="132.70000000000002" x2="263.9" y2="139.50000000000003" stroke="#d2e650" stroke-width="1.1" stroke-opacity="0.9"/><line x1="273.3" y1="132.70000000000002" x2="273.3" y2="139.50000000000003" stroke="#d2e650" stroke-width="1.1" stroke-opacity="0.9"/><line x1="279.1" y1="132.70000000000002" x2="279.1" y2="139.50000000000003" stroke="#d2e650" stroke-width="1.1" stroke-opacity="0.9"/><line x1="281.1" y1="132.70000000000002" x2="281.1" y2="139.50000000000003" stroke="#d2e650" stroke-width="1.1" stroke-opacity="0.9"/>
<line x1="25.5" y1="245.5" x2="50.5" y2="245.5" stroke="#00a000" stroke-width="1.2"/><line x1="25.5" y1="245.5" x2="25.5" y2="220.5" stroke="#1010c8" stroke-width="1.2"/><g font-size="10" font-weight="bold" font-family="Liberation Sans, sans-serif"><text x="25.0" y="216.0" fill="#1010c8">z</text><text x="26.0" y="241.0" fill="#d81010">x</text><text x="50.5" y="241.0" fill="#00a000">y</text></g>
</svg></div>
<div class="vp" style="left:311px;top:335px;width:306px;height:274px;border-color:#ffff00"><svg width="302" height="270" style="overflow:hidden">
<line x1="-2252.9" y1="1191.7" x2="50.2" y2="133.4" stroke="#838383" stroke-width="1"/><line x1="50.2" y1="133.4" x2="382.6" y2="-19.3" stroke="#747474" stroke-width="1"/><line x1="2556.9" y1="1191.7" x2="253.8" y2="133.4" stroke="#838383" stroke-width="1"/><line x1="253.8" y1="133.4" x2="-78.6" y2="-19.3" stroke="#747474" stroke-width="1"/><line x1="-3333.9" y1="1191.7" x2="-12.7" y2="86.7" stroke="#838383" stroke-width="1"/><line x1="-12.7" y1="86.7" x2="328.5" y2="-26.9" stroke="#747474" stroke-width="1"/><line x1="3637.9" y1="1191.7" x2="316.7" y2="86.7" stroke="#838383" stroke-width="1"/><line x1="316.7" y1="86.7" x2="-24.5" y2="-26.9" stroke="#747474" stroke-width="1"/><line x1="-4414.9" y1="1191.7" x2="-55.6" y2="54.9" stroke="#838383" stroke-width="1"/><line x1="-55.6" y1="54.9" x2="282.5" y2="-33.3" stroke="#747474" stroke-width="1"/><line x1="4718.9" y1="1191.7" x2="359.6" y2="54.9" stroke="#838383" stroke-width="1"/><line x1="359.6" y1="54.9" x2="21.5" y2="-33.3" stroke="#747474" stroke-width="1"/><line x1="-5495.9" y1="1191.7" x2="-86.6" y2="31.9" stroke="#838383" stroke-width="1"/><line x1="-86.6" y1="31.9" x2="243.0" y2="-38.8" stroke="#747474" stroke-width="1"/><line x1="5799.9" y1="1191.7" x2="390.6" y2="31.9" stroke="#838383" stroke-width="1"/><line x1="390.6" y1="31.9" x2="61.0" y2="-38.8" stroke="#747474" stroke-width="1"/><line x1="-4001.0" y1="722.8" x2="-110.1" y2="14.4" stroke="#838383" stroke-width="1"/><line x1="-110.1" y1="14.4" x2="208.7" y2="-43.6" stroke="#747474" stroke-width="1"/><line x1="4305.0" y1="722.8" x2="414.1" y2="14.4" stroke="#838383" stroke-width="1"/><line x1="414.1" y1="14.4" x2="95.3" y2="-43.6" stroke="#747474" stroke-width="1"/><line x1="-2347.0" y1="351.7" x2="-128.5" y2="0.8" stroke="#838383" stroke-width="1"/><line x1="-128.5" y1="0.8" x2="178.6" y2="-47.8" stroke="#747474" stroke-width="1"/><line x1="2651.0" y1="351.7" x2="432.5" y2="0.8" stroke="#838383" stroke-width="1"/><line x1="432.5" y1="0.8" x2="125.4" y2="-47.8" stroke="#747474" stroke-width="1"/><line x1="-1711.0" y1="209.0" x2="-143.3" y2="-10.2" stroke="#838383" stroke-width="1"/><line x1="-143.3" y1="-10.2" x2="152.0" y2="-51.5" stroke="#747474" stroke-width="1"/><line x1="2015.0" y1="209.0" x2="447.3" y2="-10.2" stroke="#838383" stroke-width="1"/><line x1="447.3" y1="-10.2" x2="152.0" y2="-51.5" stroke="#747474" stroke-width="1"/><line x1="-1374.3" y1="133.4" x2="-155.5" y2="-19.3" stroke="#838383" stroke-width="1"/><line x1="-155.5" y1="-19.3" x2="128.3" y2="-54.8" stroke="#747474" stroke-width="1"/><line x1="1678.3" y1="133.4" x2="459.5" y2="-19.3" stroke="#838383" stroke-width="1"/><line x1="459.5" y1="-19.3" x2="175.7" y2="-54.8" stroke="#747474" stroke-width="1"/><line x1="-1171.9" y1="1191.7" x2="152.0" y2="209.0" stroke="#000" stroke-width="1.1"/><line x1="152.0" y1="209.0" x2="447.3" y2="-10.2" stroke="#000" stroke-width="1.1"/><line x1="1475.9" y1="1191.7" x2="152.0" y2="209.0" stroke="#000" stroke-width="1.1"/><line x1="152.0" y1="209.0" x2="-143.3" y2="-10.2" stroke="#000" stroke-width="1.1"/><ellipse cx="247.8" cy="70.8" rx="30" ry="17.5" fill="#767676"/><path fill-rule="evenodd" fill="#8b8b8b" d="M213.2 70.8 a34.6 20.8 0 1 0 69.2 0 a34.6 20.8 0 1 0 -69.2 0 Z M220.8 70.3 a27 16 0 1 0 54 0 a27 16 0 1 0 -54 0 Z"/><polygon points="247.5,33.6 267.5,44.2 247.5,53.5 228.2,43.6" fill="#939393" stroke="#7c7c7c" stroke-width="0.6"/><polygon points="228.2,43.6 247.5,53.5 247.5,77.9 230.0,66.6" fill="#959595" stroke="#7c7c7c" stroke-width="0.6"/><polygon points="267.5,44.2 247.5,53.5 247.5,77.9 266.9,66.0" fill="#8b8b8b" stroke="#7c7c7c" stroke-width="0.6"/><polygon points="243.0,40.0 252.0,40.5 252.0,47.0 243.0,46.5" fill="#8b8b8b" stroke="none" stroke-width="0.6"/><polygon points="232.5,52.0 243.0,57.0 243.0,61.0 232.5,56.0" fill="#8e8e8e" stroke="none" stroke-width="0.6"/><polygon points="233.5,60.0 243.5,65.0 243.5,69.0 233.5,64.0" fill="#8e8e8e" stroke="none" stroke-width="0.6"/><polygon points="252.0,58.0 263.0,52.5 263.0,60.0 252.0,66.0" fill="#858585" stroke="none" stroke-width="0.6"/><line x1="171.9" y1="116.8" x2="204.8" y2="115.4" stroke="#f0f0f0" stroke-width="1.97"/><line x1="171.2" y1="115.0" x2="202.1" y2="110.7" stroke="#f0f0f0" stroke-width="1.91"/><line x1="169.8" y1="113.3" x2="198.1" y2="106.4" stroke="#f0f0f0" stroke-width="1.85"/><line x1="168.0" y1="111.7" x2="192.9" y2="102.5" stroke="#f0f0f0" stroke-width="1.80"/><line x1="165.7" y1="110.3" x2="186.8" y2="99.2" stroke="#f0f0f0" stroke-width="1.75"/><line x1="163.1" y1="109.2" x2="179.9" y2="96.5" stroke="#f0f0f0" stroke-width="1.71"/><line x1="160.1" y1="108.3" x2="172.3" y2="94.5" stroke="#f0f0f0" stroke-width="1.68"/><line x1="157.0" y1="107.8" x2="164.4" y2="93.1" stroke="#f0f0f0" stroke-width="1.66"/><line x1="153.7" y1="107.5" x2="156.2" y2="92.4" stroke="#f0f0f0" stroke-width="1.65"/><line x1="150.3" y1="107.5" x2="147.8" y2="92.4" stroke="#f0f0f0" stroke-width="1.65"/><line x1="148.4" y1="107.1" x2="141.0" y2="92.4" stroke="#000" stroke-width="1.1" stroke-opacity="0.85"/><line x1="147.0" y1="107.8" x2="139.6" y2="93.1" stroke="#f0f0f0" stroke-width="1.66"/><line x1="145.0" y1="107.4" x2="132.8" y2="93.5" stroke="#000" stroke-width="1.1" stroke-opacity="0.85"/><line x1="143.9" y1="108.3" x2="131.7" y2="94.5" stroke="#f0f0f0" stroke-width="1.68"/><line x1="141.8" y1="108.0" x2="125.0" y2="95.3" stroke="#000" stroke-width="1.1" stroke-opacity="0.85"/><line x1="140.9" y1="109.2" x2="124.1" y2="96.5" stroke="#f0f0f0" stroke-width="1.71"/><line x1="139.0" y1="109.0" x2="117.9" y2="97.9" stroke="#000" stroke-width="1.1" stroke-opacity="0.85"/><line x1="138.3" y1="110.3" x2="117.2" y2="99.2" stroke="#f0f0f0" stroke-width="1.75"/><line x1="136.5" y1="110.3" x2="111.6" y2="101.1" stroke="#000" stroke-width="1.1" stroke-opacity="0.85"/><line x1="136.0" y1="111.7" x2="111.1" y2="102.5" stroke="#f0f0f0" stroke-width="1.80"/><line x1="134.2" y1="113.3" x2="105.9" y2="106.4" stroke="#f0f0f0" stroke-width="1.85"/><line x1="132.8" y1="115.0" x2="101.9" y2="110.7" stroke="#f0f0f0" stroke-width="1.91"/><line x1="132.1" y1="116.8" x2="99.2" y2="115.4" stroke="#f0f0f0" stroke-width="1.97"/><line x1="131.9" y1="118.7" x2="98.1" y2="120.5" stroke="#f0f0f0" stroke-width="2.03"/><line x1="132.4" y1="120.6" x2="98.6" y2="125.6" stroke="#f0f0f0" stroke-width="2.09"/><line x1="133.4" y1="122.4" x2="100.8" y2="130.8" stroke="#f0f0f0" stroke-width="2.15"/><line x1="135.1" y1="124.1" x2="104.8" y2="135.7" stroke="#f0f0f0" stroke-width="2.20"/><circle cx="106.2" cy="135.1" r="0.6" fill="#404040"/><line x1="137.3" y1="125.6" x2="110.5" y2="140.2" stroke="#f0f0f0" stroke-width="2.25"/><circle cx="111.8" cy="139.5" r="0.6" fill="#404040"/><line x1="140.0" y1="126.9" x2="117.8" y2="144.1" stroke="#f0f0f0" stroke-width="2.29"/><circle cx="119.0" cy="143.2" r="0.6" fill="#404040"/><line x1="143.1" y1="127.9" x2="126.5" y2="147.3" stroke="#f0f0f0" stroke-width="2.32"/><circle cx="127.5" cy="146.1" r="0.6" fill="#404040"/><line x1="146.6" y1="128.6" x2="136.3" y2="149.5" stroke="#f0f0f0" stroke-width="2.34"/><circle cx="136.9" cy="148.1" r="0.6" fill="#404040"/><line x1="150.2" y1="129.0" x2="146.7" y2="150.6" stroke="#f0f0f0" stroke-width="2.35"/><circle cx="146.9" cy="149.1" r="0.6" fill="#404040"/><line x1="153.8" y1="129.0" x2="157.3" y2="150.6" stroke="#f0f0f0" stroke-width="2.35"/><circle cx="157.1" cy="149.1" r="0.6" fill="#404040"/><line x1="158.8" y1="128.0" x2="169.1" y2="148.8" stroke="#000" stroke-width="1.1" stroke-opacity="0.85"/><line x1="157.4" y1="128.6" x2="167.7" y2="149.5" stroke="#f0f0f0" stroke-width="2.34"/><circle cx="167.1" cy="148.1" r="0.6" fill="#404040"/><line x1="162.0" y1="127.0" x2="178.6" y2="146.3" stroke="#000" stroke-width="1.1" stroke-opacity="0.85"/><line x1="160.9" y1="127.9" x2="177.5" y2="147.3" stroke="#f0f0f0" stroke-width="2.32"/><circle cx="176.5" cy="146.1" r="0.6" fill="#404040"/><line x1="164.9" y1="125.7" x2="187.1" y2="143.0" stroke="#000" stroke-width="1.1" stroke-opacity="0.85"/><line x1="164.0" y1="126.9" x2="186.2" y2="144.1" stroke="#f0f0f0" stroke-width="2.29"/><circle cx="185.0" cy="143.2" r="0.6" fill="#404040"/><line x1="167.4" y1="124.3" x2="194.2" y2="138.9" stroke="#000" stroke-width="1.1" stroke-opacity="0.85"/><line x1="166.7" y1="125.6" x2="193.5" y2="140.2" stroke="#f0f0f0" stroke-width="2.25"/><circle cx="192.2" cy="139.5" r="0.6" fill="#404040"/><line x1="169.4" y1="122.7" x2="199.7" y2="134.3" stroke="#000" stroke-width="1.1" stroke-opacity="0.85"/><line x1="168.9" y1="124.1" x2="199.2" y2="135.7" stroke="#f0f0f0" stroke-width="2.20"/><circle cx="197.8" cy="135.1" r="0.6" fill="#404040"/><line x1="170.9" y1="120.9" x2="203.6" y2="129.3" stroke="#000" stroke-width="1.1" stroke-opacity="0.85"/><line x1="170.6" y1="122.4" x2="203.2" y2="130.8" stroke="#f0f0f0" stroke-width="2.15"/><line x1="171.6" y1="120.6" x2="205.4" y2="125.6" stroke="#f0f0f0" stroke-width="2.09"/><line x1="172.1" y1="118.7" x2="205.9" y2="120.5" stroke="#f0f0f0" stroke-width="2.03"/><line x1="26" y1="245" x2="26" y2="225.5" stroke="#1010c8" stroke-width="1.2"/><line x1="26" y1="245" x2="43.5" y2="235.6" stroke="#00a000" stroke-width="1.2"/><line x1="26" y1="245" x2="43" y2="253" stroke="#d81010" stroke-width="1.2"/><g font-size="10" font-weight="bold" font-family="Liberation Sans, sans-serif"><text x="24.5" y="220.7" fill="#1010c8">z</text><text x="43.5" y="231" fill="#00a000">y</text><text x="43.5" y="249.5" fill="#d81010">x</text></g>
</svg></div>
<div class="a" style="left:1px;top:331px;width:616px;height:1px;background:#dadada"></div>
<!-- command panel -->
<div class="a" style="left:621px;top:88px;width:1px;height:559px;background:#8c8c8c"></div>
<div class="a" style="left:620px;top:63px;width:1px;height:25px;background:#f4f4f4"></div>
<div class="a" style="left:620px;top:87px;width:176px;height:1px;background:#f4f4f4"></div>
<!-- tabs -->
<div class="a" style="left:620px;top:63px;width:28px;height:24px;border:1px solid;border-color:#f4f4f4 #8c8c8c transparent #f4f4f4;border-radius:3px 3px 0 0"></div>
<div class="a" style="left:649px;top:62px;width:28px;height:26px;background:#cfcfcf;border:1px solid;border-color:#f8f8f8 #8c8c8c #cfcfcf #f8f8f8;border-radius:3px 3px 0 0"></div>
<div class="a" style="left:678px;top:63px;width:28px;height:24px;border:1px solid;border-color:#f4f4f4 #8c8c8c transparent #f4f4f4;border-radius:3px 3px 0 0"></div>
<div class="a" style="left:707px;top:63px;width:28px;height:24px;border:1px solid;border-color:#f4f4f4 #8c8c8c transparent #f4f4f4;border-radius:3px 3px 0 0"></div>
<div class="a" style="left:736px;top:63px;width:28px;height:24px;border:1px solid;border-color:#f4f4f4 #8c8c8c transparent #f4f4f4;border-radius:3px 3px 0 0"></div>
<div class="a" style="left:765px;top:63px;width:28px;height:24px;border:1px solid;border-color:#f4f4f4 #8c8c8c transparent #f4f4f4;border-radius:3px 3px 0 0"></div>
<svg width="182" height="30" viewBox="620 60 182 30" style="left:620px;top:60px">
<defs>
<radialGradient id="gStar" cx="0.5" cy="0.5" r="0.5"><stop offset="0" stop-color="#ffffff"/><stop offset="0.4" stop-color="#fff8d0" stop-opacity="0.9"/><stop offset="1" stop-color="#f0e8b0" stop-opacity="0"/></radialGradient>
<linearGradient id="gPipe" x1="0" y1="0" x2="1" y2="1"><stop offset="0" stop-color="#303858"/><stop offset="0.45" stop-color="#c8d0f0"/><stop offset="0.6" stop-color="#5a6490"/><stop offset="1" stop-color="#202848"/></linearGradient>
<linearGradient id="gHam" x1="0" y1="0" x2="0" y2="1"><stop offset="0" stop-color="#e04030"/><stop offset="0.55" stop-color="#c02818"/><stop offset="0.6" stop-color="#202020"/><stop offset="1" stop-color="#101010"/></linearGradient>
</defs>
<!-- create: star + arrow -->
<circle cx="630.5" cy="69.5" r="5" fill="url(#gStar)"/>
<path d="M625 69.5 H636 M630.5 64 V75 M627 66 L634 73 M634 66 L627 73" stroke="#fffbe4" stroke-width="1" fill="none"/>
<circle cx="630.5" cy="69.5" r="1.6" fill="#fff"/>
<path d="M632.2 70.6 L633.8 81.4 L636.2 79.2 L640 84 L641.8 82.6 L638 77.8 L641.2 76.4 Z" fill="#fff" stroke="#383838" stroke-width="0.9" stroke-linejoin="round"/>
<!-- modify: bent pipe -->
<path d="M654.5 68.5 H672 V85 H654.5 Z" fill="none" stroke="#8c8c8c" stroke-width="0.6" stroke-dasharray="1 1"/>
<path d="M654.8 84 C654.8 74 662 67.2 671.5 67.2 L671.5 73.4 C665.5 73.4 661 78 661 84 Z" fill="#39426c" stroke="#1c2244" stroke-width="0.8"/>
<path d="M656.8 84 C656.8 75.5 663 69.2 671.5 69.2" fill="none" stroke="#d4dcf8" stroke-width="1.4"/>
<path d="M658.6 84 C658.6 77 664 71.2 671.5 71.2" fill="none" stroke="#6a76a8" stroke-width="1.2"/>
<rect x="653.5" y="67.5" width="1.6" height="1.6" fill="#000"/><rect x="671" y="83.5" width="1.6" height="1.6" fill="#000"/>
<!-- hierarchy -->
<g stroke="#505078" stroke-width="1.1" fill="none"><path d="M692 73.5 V79 M692 73.5 L684.5 80 M692 73.5 L699.5 80"/></g>
<rect x="688.5" y="65.5" width="7" height="7.5" fill="#e8e8f4" stroke="#505090" stroke-width="1.2"/>
<rect x="682.5" y="79.5" width="4" height="4" fill="#f4f4fc" stroke="#505090" stroke-width="1.1"/>
<rect x="690" y="79.5" width="4" height="4" fill="#f4f4fc" stroke="#505090" stroke-width="1.1"/>
<rect x="697.5" y="79.5" width="4" height="4" fill="#f4f4fc" stroke="#505090" stroke-width="1.1"/>
<!-- motion wheel -->
<path d="M714.5 69 A9 9 0 0 0 714.5 80.5 M712.3 70.5 A8 8 0 0 0 712.3 79" fill="none" stroke="#505050" stroke-width="0.9"/>
<circle cx="723.2" cy="74.8" r="6.6" fill="#d4d4d4" stroke="#101010" stroke-width="1.7"/>
<g stroke="#707070" stroke-width="0.9"><path d="M723.2 69.5 V80 M718 74.8 H728.5 M719.5 71 L727 78.5 M727 71 L719.5 78.5"/></g>
<circle cx="723.2" cy="74.8" r="1.5" fill="#e01020"/>
<!-- display monitor -->
<rect x="741.3" y="67" width="18" height="14.5" rx="1.5" fill="#fff" stroke="#282828" stroke-width="2"/>
<rect x="745.8" y="69.5" width="3" height="8.5" rx="1" fill="#4060c0" stroke="#203080" stroke-width="0.6"/>
<path d="M749.5 79 L752.5 69.5 L756 79 Z" fill="#e81020"/>
<rect x="747" y="82.5" width="7" height="1.5" fill="#506050"/><rect x="744.5" y="84" width="12" height="1.3" fill="#607060"/>
<!-- utilities hammer -->
<path d="M771 67.5 C772 65 775 65.2 777 66 L783 66 C785 66.2 786.5 68 786.2 70.5 L784.6 70.2 C784.4 69 783.5 68.8 781 68.8 V70.2 H777 V68.6 C775 68.2 773 68.5 772 69.5 Z" fill="#606060" stroke="#202020" stroke-width="0.7"/>
<path d="M777.3 70.2 H780.7 L781.2 84 H776.8 Z" fill="url(#gHam)"/>
</svg>

<!-- name field + colour -->
<div class="a" style="left:625px;top:94px;width:146px;height:19px;background:#e2e2e2;border:1px solid;border-color:#000 #f4f4f4 #f4f4f4 #000;box-shadow:inset 1px 1px 0 #707070"></div>
<div class="a" style="left:776px;top:94px;width:16px;height:19px;background:#c6dc58;border:1px solid;border-color:#a0b040 #e0f080 #e0f080 #a0b040"></div>
<!-- modifier list dropdown -->
<div class="a" style="left:626px;top:118px;width:167px;height:23px;background:#e2e2e2;border:1px solid;border-color:#707070 #f4f4f4 #f4f4f4 #707070;box-shadow:inset 1px 1px 0 #9a9a9a"></div>
<div class="a" style="left:775px;top:121px;width:16px;height:18px;background:#ececec;border:1px solid;border-color:#fff #606060 #606060 #fff"></div>
<svg width="9" height="5" style="left:779px;top:128px"><path d="M0 0h8l-4 4.5z" fill="#000"/></svg>
<!-- stack list -->
<div class="a" style="left:626px;top:147px;width:166px;height:115px;background:#e2e2e2;border:1px solid;border-color:#808080 #f4f4f4 #f4f4f4 #808080"></div>
<svg width="180" height="30" viewBox="622 262 180 30" style="left:622px;top:262px">
<!-- pin (disabled) -->
<g fill="none" stroke="#fff" stroke-width="1" transform="translate(1 1)"><path d="M633 277.5 H640 M640.5 273.5 V281.5 M641 275 H646 V280 H641 M647.5 273 V282"/></g>
<g fill="none" stroke="#848484" stroke-width="1"><path d="M633 277.5 H640 M640.5 273.5 V281.5 M641 275 H646 V280 H641 M647.5 273 V282"/></g>
<path d="M659.5 270 V284.5" stroke="#8c8c8c"/><path d="M660.5 270 V284.5" stroke="#e8e8e8"/>
<!-- show end result (pressed) -->
<rect x="665.5" y="266.5" width="23" height="22" fill="#cbcbcb"/>
<path d="M665.5 288.5 V266.5 H688.5" fill="none" stroke="#848484"/><path d="M665.5 288.5 H688.5 V266.5" fill="none" stroke="#f4f4f4"/>
<g fill="none" stroke="#fff" stroke-width="1" transform="translate(1 0)"><path d="M673.5 272 C675.8 273 675.5 276 675.5 284 M683.5 272 C681.2 273 681.5 276 681.5 284"/></g>
<g fill="none" stroke="#848484" stroke-width="1"><path d="M673.5 272 C675.8 273 675.5 276 675.5 284 M683.5 272 C681.2 273 681.5 276 681.5 284"/></g>
<path d="M695.5 270 V284.5" stroke="#8c8c8c"/><path d="M696.5 270 V284.5" stroke="#e8e8e8"/>
<!-- make unique -->
<g fill="none" stroke="#fff" stroke-width="1" transform="translate(1 1)"><path d="M706.5 271.5 L712 280 M720 271.5 L714.5 280"/><circle cx="713.2" cy="281.3" r="1.8"/></g>
<g fill="none" stroke="#848484" stroke-width="1"><path d="M706.5 271.5 L712 280 M720 271.5 L714.5 280"/><circle cx="713.2" cy="281.3" r="1.8"/></g>
<!-- trash -->
<g fill="none" stroke="#fff" stroke-width="1" transform="translate(1 1)"><path d="M732.5 276 H741 V282 Q741 283.5 739.5 283.5 H734 Q732.5 283.5 732.5 282 Z M732 275.5 Q732 273.5 736.7 273.5 Q741.5 273.5 741.5 275.5 M735 273 Q736.7 270.5 738.5 273"/></g>
<g fill="none" stroke="#848484" stroke-width="1"><path d="M732.5 276 H741 V282 Q741 283.5 739.5 283.5 H734 Q732.5 283.5 732.5 282 Z M732 275.5 Q732 273.5 736.7 273.5 Q741.5 273.5 741.5 275.5 M735 273 Q736.7 270.5 738.5 273"/></g>
<path d="M755.5 270 V284.5" stroke="#8c8c8c"/><path d="M756.5 270 V284.5" stroke="#e8e8e8"/>
<!-- configure sets -->
<rect x="766" y="271.5" width="13.5" height="12.5" fill="#fff" stroke="#1818a0" stroke-width="1"/>
<rect x="766" y="271" width="13.5" height="3" fill="#1818a0"/>
<g fill="#000"><rect x="771" y="277" width="9" height="1"/><rect x="771" y="277" width="1" height="7"/><rect x="775.5" y="277" width="1" height="8"/><rect x="780" y="277" width="1" height="8"/><rect x="771" y="281" width="10" height="1"/><rect x="771" y="284.5" width="10" height="1"/></g>
<g fill="#fff"><rect x="772" y="278" width="3.5" height="3"/><rect x="776.5" y="278" width="3.5" height="3"/><rect x="772" y="282" width="3.5" height="2.5"/><rect x="776.5" y="282" width="3.5" height="2.5"/></g>
</svg>

<!-- divider + rollout area -->
<div class="a" style="left:622px;top:300px;width:174px;height:1px;background:#ececec"></div><div class="a" style="left:622px;top:301px;width:174px;height:1px;background:#000"></div><div class="a" style="left:622px;top:302px;width:174px;height:1px;background:#6a6a6a"></div>
<div class="a" style="left:621px;top:310px;width:175px;height:337px;border:1px solid;border-color:#707070 #e8e8e8 #e8e8e8 #707070;background:#c8c8c8"></div>
<div class="a" style="left:617px;top:653px;width:184px;height:1px;background:#8c8c8c"></div>
<div class="a" style="left:617px;top:654px;width:184px;height:1px;background:#e8e8e8"></div>

<!-- time slider -->
<div class="btn" style="left:1px;top:609px;width:16px;height:17px;border-color:#f4f4f4 #909090 #909090 #f4f4f4"></div>
<div class="btn" style="left:17px;top:609px;width:125px;height:17px;border-color:#f4f4f4 #202020 #000 #f4f4f4;box-shadow:inset -1px -1px 0 #707070;line-height:14px;font-size:11.5px"></div>
<div class="btn" style="left:142px;top:609px;width:15px;height:17px;border-color:#f4f4f4 #909090 #909090 #f4f4f4"></div>
<svg width="160" height="20" style="left:0;top:608px" fill="none" stroke="#000" stroke-width="1.1"><path d="M10.6 5.8L6.4 9.3L10.6 12.8"/><path d="M147.6 5.8L151.8 9.3L147.6 12.8"/></svg>
<div class="a" style="left:1px;top:627px;width:616px;height:1px;background:#f4f4f4"></div>
<div class="a" style="left:1px;top:628px;width:616px;height:1px;background:#9c9c9c"></div>
<div class="a" style="left:616px;top:626px;width:1px;height:1px;background:#000"></div>
<svg width="20" height="18" viewBox="13 632 20 18" style="left:13px;top:632px">
<rect x="14.6" y="633.6" width="15.8" height="4.6" fill="#e8e8e8" stroke="#000" stroke-width="1.2"/>
<path d="M16 636.6 C17.5 634.6 19 634.6 20.5 636 C22 637.2 23.5 636.6 24.5 636 H29" fill="none" stroke="#000" stroke-width="0.9"/>
<path d="M17.4 644.8 V640.4 M15.4 642.4 L17.4 640.2 L19.4 642.4 M27.6 640 V644.4 M25.6 642.4 L27.6 644.6 L29.6 642.4" fill="none" stroke="#000" stroke-width="1.1"/>
<rect x="14" y="646" width="17" height="2.8" fill="#000"/><path d="M15.5 647.4 H23 M24.5 647.4 H29.5" stroke="#e8e8e8" stroke-width="0.8"/>
</svg>
<svg width="620" height="30" style="left:0;top:626px" font-family="Liberation Sans, sans-serif" font-size="11.5"><rect x="50.5" y="2.5" width="7.5" height="25" fill="#9ab8dc" stroke="#5f86b8" stroke-width="1"/><line x1="54.3" y1="2.5" x2="54.3" y2="26.5" stroke="#6a6a6a" stroke-width="1"/><text x="54.3" y="24.3" text-anchor="middle" fill="#000">0</text><line x1="64.5" y1="2.5" x2="64.5" y2="13.5" stroke="#6a6a6a" stroke-width="1"/><line x1="74.7" y1="2.5" x2="74.7" y2="13.5" stroke="#6a6a6a" stroke-width="1"/><line x1="84.9" y1="2.5" x2="84.9" y2="13.5" stroke="#6a6a6a" stroke-width="1"/><line x1="95.1" y1="2.5" x2="95.1" y2="13.5" stroke="#6a6a6a" stroke-width="1"/><line x1="105.3" y1="2.5" x2="105.3" y2="26.5" stroke="#6a6a6a" stroke-width="1"/><text x="105.3" y="24.3" text-anchor="middle" fill="#000">10</text><line x1="115.5" y1="2.5" x2="115.5" y2="13.5" stroke="#6a6a6a" stroke-width="1"/><line x1="125.7" y1="2.5" x2="125.7" y2="13.5" stroke="#6a6a6a" stroke-width="1"/><line x1="135.9" y1="2.5" x2="135.9" y2="13.5" stroke="#6a6a6a" stroke-width="1"/><line x1="146.1" y1="2.5" x2="146.1" y2="13.5" stroke="#6a6a6a" stroke-width="1"/><line x1="156.3" y1="2.5" x2="156.3" y2="26.5" stroke="#6a6a6a" stroke-width="1"/><text x="156.3" y="24.3" text-anchor="middle" fill="#000">20</text><line x1="166.5" y1="2.5" x2="166.5" y2="13.5" stroke="#6a6a6a" stroke-width="1"/><line x1="176.7" y1="2.5" x2="176.7" y2="13.5" stroke="#6a6a6a" stroke-width="1"/><line x1="186.9" y1="2.5" x2="186.9" y2="13.5" stroke="#6a6a6a" stroke-width="1"/><line x1="197.1" y1="2.5" x2="197.1" y2="13.5" stroke="#6a6a6a" stroke-width="1"/><line x1="207.3" y1="2.5" x2="207.3" y2="26.5" stroke="#6a6a6a" stroke-width="1"/><text x="207.3" y="24.3" text-anchor="middle" fill="#000">30</text><line x1="217.5" y1="2.5" x2="217.5" y2="13.5" stroke="#6a6a6a" stroke-width="1"/><line x1="227.7" y1="2.5" x2="227.7" y2="13.5" stroke="#6a6a6a" stroke-width="1"/><line x1="237.9" y1="2.5" x2="237.9" y2="13.5" stroke="#6a6a6a" stroke-width="1"/><line x1="248.1" y1="2.5" x2="248.1" y2="13.5" stroke="#6a6a6a" stroke-width="1"/><line x1="258.3" y1="2.5" x2="258.3" y2="26.5" stroke="#6a6a6a" stroke-width="1"/><text x="258.3" y="24.3" text-anchor="middle" fill="#000">40</text><line x1="268.5" y1="2.5" x2="268.5" y2="13.5" stroke="#6a6a6a" stroke-width="1"/><line x1="278.7" y1="2.5" x2="278.7" y2="13.5" stroke="#6a6a6a" stroke-width="1"/><line x1="288.9" y1="2.5" x2="288.9" y2="13.5" stroke="#6a6a6a" stroke-width="1"/><line x1="299.1" y1="2.5" x2="299.1" y2="13.5" stroke="#6a6a6a" stroke-width="1"/><line x1="309.3" y1="2.5" x2="309.3" y2="26.5" stroke="#6a6a6a" stroke-width="1"/><text x="309.3" y="24.3" text-anchor="middle" fill="#000">50</text><line x1="319.5" y1="2.5" x2="319.5" y2="13.5" stroke="#6a6a6a" stroke-width="1"/><line x1="329.7" y1="2.5" x2="329.7" y2="13.5" stroke="#6a6a6a" stroke-width="1"/><line x1="339.9" y1="2.5" x2="339.9" y2="13.5" stroke="#6a6a6a" stroke-width="1"/><line x1="350.1" y1="2.5" x2="350.1" y2="13.5" stroke="#6a6a6a" stroke-width="1"/><line x1="360.3" y1="2.5" x2="360.3" y2="26.5" stroke="#6a6a6a" stroke-width="1"/><text x="360.3" y="24.3" text-anchor="middle" fill="#000">60</text><line x1="370.5" y1="2.5" x2="370.5" y2="13.5" stroke="#6a6a6a" stroke-width="1"/><line x1="380.7" y1="2.5" x2="380.7" y2="13.5" stroke="#6a6a6a" stroke-width="1"/><line x1="390.9" y1="2.5" x2="390.9" y2="13.5" stroke="#6a6a6a" stroke-width="1"/><line x1="401.1" y1="2.5" x2="401.1" y2="13.5" stroke="#6a6a6a" stroke-width="1"/><line x1="411.3" y1="2.5" x2="411.3" y2="26.5" stroke="#6a6a6a" stroke-width="1"/><text x="411.3" y="24.3" text-anchor="middle" fill="#000">70</text><line x1="421.5" y1="2.5" x2="421.5" y2="13.5" stroke="#6a6a6a" stroke-width="1"/><line x1="431.7" y1="2.5" x2="431.7" y2="13.5" stroke="#6a6a6a" stroke-width="1"/><line x1="441.9" y1="2.5" x2="441.9" y2="13.5" stroke="#6a6a6a" stroke-width="1"/><line x1="452.1" y1="2.5" x2="452.1" y2="13.5" stroke="#6a6a6a" stroke-width="1"/><line x1="462.3" y1="2.5" x2="462.3" y2="26.5" stroke="#6a6a6a" stroke-width="1"/><text x="462.3" y="24.3" text-anchor="middle" fill="#000">80</text><line x1="472.5" y1="2.5" x2="472.5" y2="13.5" stroke="#6a6a6a" stroke-width="1"/><line x1="482.7" y1="2.5" x2="482.7" y2="13.5" stroke="#6a6a6a" stroke-width="1"/><line x1="492.9" y1="2.5" x2="492.9" y2="13.5" stroke="#6a6a6a" stroke-width="1"/><line x1="503.1" y1="2.5" x2="503.1" y2="13.5" stroke="#6a6a6a" stroke-width="1"/><line x1="513.3" y1="2.5" x2="513.3" y2="26.5" stroke="#6a6a6a" stroke-width="1"/><text x="513.3" y="24.3" text-anchor="middle" fill="#000">90</text><line x1="523.5" y1="2.5" x2="523.5" y2="13.5" stroke="#6a6a6a" stroke-width="1"/><line x1="533.7" y1="2.5" x2="533.7" y2="13.5" stroke="#6a6a6a" stroke-width="1"/><line x1="543.9" y1="2.5" x2="543.9" y2="13.5" stroke="#6a6a6a" stroke-width="1"/><line x1="554.1" y1="2.5" x2="554.1" y2="13.5" stroke="#6a6a6a" stroke-width="1"/><line x1="564.3" y1="2.5" x2="564.3" y2="26.5" stroke="#6a6a6a" stroke-width="1"/><text x="564.3" y="24.3" text-anchor="middle" fill="#000">100</text></svg>
<div class="a" style="left:1px;top:654px;width:616px;height:1px;background:#f0f0f0"></div>
<!-- status -->
<div class="a" style="left:3px;top:657px;width:35px;height:22px;background:#e0c4c4;border:1px solid;border-color:#909090 #f4f4f4 #f4f4f4 #909090"></div>
<div class="a" style="left:3px;top:680px;width:35px;height:21px;background:#fff;border:1px solid;border-color:#909090 #f4f4f4 #f4f4f4 #909090"></div>
<div class="t" style="left:12px;top:684px;font-family:'Liberation Mono',monospace;font-weight:bold;font-size:11px;width:22px;overflow:hidden">:ex</div>
<div class="vs" style="left:43px;top:656px;height:46px;border-left-color:#f4f4f4;border-right-color:#8c8c8c"></div>
<div class="sunk" style="left:48px;top:659px;width:48px;height:20px;background:#cdcdcd;border-color:#808080 #f4f4f4 #f4f4f4 #808080;line-height:17px;padding-left:5px;font-size:11.5px"></div>
<svg width="60" height="24" viewBox="100 656 60 24" style="left:100px;top:656px">
<path d="M106.8 666 V664 A2.4 2.6 0 0 1 111.6 664 V666" fill="none" stroke="#9c9c9c" stroke-width="1.5"/>
<rect x="105.3" y="665.8" width="7.6" height="7.2" fill="#9c9c9c"/>
<path d="M105.3 667.5 h7.6 M105.3 669.5 h7.6 M105.3 671.5 h7.6" stroke="#7c7c7c" stroke-width="1"/>
<rect x="129.6" y="660.6" width="13.8" height="13.8" fill="#cdcdcd" stroke="#000" stroke-width="1.3"/>
<path d="M136.5 661 V674 M130 667.5 H143" stroke="#6c6c6c" stroke-width="1"/>
<circle cx="136.5" cy="667.5" r="2.1" fill="#808080" stroke="#000" stroke-width="1.3"/>
</svg>

<div class="sunk" style="left:162px;top:659px;width:57px;height:20px;background:#d4d4d4;border-color:#303030 #f4f4f4 #f4f4f4 #101010;border-left-width:2px;box-shadow:inset 0 1px 0 #808080;color:#808080;line-height:17px;padding-left:3px;font-size:11.5px"></div>
<div class="sunk" style="left:244px;top:659px;width:57px;height:20px;background:#d4d4d4;border-color:#303030 #f4f4f4 #f4f4f4 #101010;border-left-width:2px;box-shadow:inset 0 1px 0 #808080;color:#808080;line-height:17px;padding-left:3px;font-size:11.5px"></div>
<div class="sunk" style="left:326px;top:659px;width:34px;height:20px;background:#d4d4d4;border-color:#303030 transparent #f4f4f4 #101010;border-left-width:2px;box-shadow:inset 0 1px 0 #808080;color:#808080;line-height:17px;padding-left:3px;font-size:11.5px"></div>
<div class="sunk" style="left:48px;top:683px;width:312px;height:20px;background:#cdcdcd;border-color:#808080 transparent #f4f4f4 #808080;line-height:17px;padding-left:5px;font-size:11.5px"></div>
<!-- key button -->
<div class="btn" style="left:360px;top:657px;width:43px;height:46px;border-color:#f4f4f4 #707070 #707070 #f4f4f4"></div>
<svg width="24" height="10" style="left:369px;top:674px"><circle cx="4.5" cy="5" r="3.3" fill="none" stroke="#000" stroke-width="1.8"/><path d="M8 4h15v2h-2v3h-2v-3h-2v2h-2v-2h-7z" fill="#000"/></svg>
<div class="btn" style="left:406px;top:657px;width:47px;height:22px;line-height:19px;font-size:11.5px;text-align:left;padding-left:3px"></div>
<div class="btn" style="left:406px;top:680px;width:47px;height:22px;line-height:19px;font-size:11.5px"></div>
<div class="sunk" style="left:457px;top:657px;width:114px;height:22px;background:#e2e2e2;border-color:#606060 #f4f4f4 #f4f4f4 #606060;box-shadow:inset 1px 1px 0 #9a9a9a;line-height:19px;padding-left:4px;font-size:11.5px"></div>
<div class="a" style="left:554px;top:660px;width:15px;height:17px;background:#ececec;border:1px solid;border-color:#fff #606060 #606060 #fff"></div>
<svg width="9" height="5" style="left:558px;top:666px"><path d="M0 0h8l-4 4.5z" fill="#000"/></svg>
<div class="btn" style="left:483px;top:680px;width:90px;height:22px;line-height:19px;font-size:11.5px"></div>
<svg width="24" height="22" viewBox="458 681 24 22" style="left:458px;top:681px">
<path d="M460.2 697 H469.7 M466 684.7 H475.4" stroke="#6868d0" stroke-width="1.3"/>
<path d="M461 689.5 L464.7 697 L470.5 684.7 L474.7 691" fill="none" stroke="#e02030" stroke-width="1.3"/>
<rect x="463.9" y="696.3" width="1.6" height="1.4" fill="#202020"/><rect x="469.7" y="684" width="1.6" height="1.4" fill="#202020"/>
<path d="M475 700 L478.6 696.4 V700 Z" fill="#000"/>
</svg>
<svg width="230" height="50" viewBox="574 655 230 50" style="left:574px;top:655px">
<defs><path id="fl" d="M0 3 L3 0 V3 Z" fill="#000"/>
<linearGradient id="gLens" x1="0" y1="0" x2="1" y2="1"><stop offset="0" stop-color="#ffffff"/><stop offset="1" stop-color="#c8c8d8"/></linearGradient></defs>
<g fill="#000">
<!-- go to start -->
<rect x="581" y="663.8" width="1.8" height="7.6"/><path d="M582.8 667.6 L590 663.8 V671.4 Z M589.6 667.6 L596.8 663.8 V671.4 Z"/>
<!-- prev -->
<path d="M608.6 667.6 L615.8 663.8 V671.4 Z"/><rect x="616.8" y="663.8" width="1.8" height="7.6"/><rect x="620" y="663.8" width="1.8" height="7.6"/>
<!-- play -->
<path d="M635 663.8 L642.2 667.6 L635 671.4 Z"/>
<!-- next -->
<rect x="653.4" y="663.8" width="1.8" height="7.6"/><rect x="656.6" y="663.8" width="1.8" height="7.6"/><path d="M659.6 663.8 L666.8 667.6 L659.6 671.4 Z"/>
<!-- go to end -->
<path d="M679 663.8 L686.2 667.6 L679 671.4 Z M686 663.8 L693.2 667.6 L686 671.4 Z"/><rect x="693.2" y="663.8" width="1.8" height="7.6"/>
<!-- key mode -->
<rect x="584" y="685.6" width="1.4" height="7"/><rect x="593.6" y="685.6" width="1.4" height="7"/><path d="M585.4 689.1 L589.6 686 V692.2 Z M593.6 689.1 L589.4 686 V692.2 Z"/>
</g>
<rect x="630.8" y="661.2" width="14" height="13" fill="none" stroke="#000" stroke-width="1.8"/>
<use href="#fl" x="645.5" y="674.5"/>
<g><path d="M602.5 660 V675 M602.5 682 V700 M674.5 660 V675 M703.5 660 V675.5 M703.5 682 V698" stroke="#8c8c8c"/><path d="M603.5 660 V675 M603.5 682 V700 M675.5 660 V675 M704.5 660 V675.5 M704.5 682 V698" stroke="#ececec"/></g>
<!-- spinner -->
<rect x="669" y="682.5" width="8.5" height="14.5" fill="#dcdcdc"/><path d="M669 697 H677.5 V682.5" fill="none" stroke="#707070"/><path d="M669 689.8 H677.5" stroke="#909090"/>
<path d="M670.6 687.8 L673.2 684.6 L675.8 687.8 Z M670.6 691.8 L673.2 695 L675.8 691.8 Z" fill="#000"/>
<!-- time config -->
<rect x="685.5" y="684" width="9" height="9.5" fill="#d8d8d8" stroke="#000" stroke-width="1.1"/><rect x="685.5" y="684" width="9" height="1.8" fill="#000"/>
<circle cx="693.6" cy="690.4" r="3.4" fill="#e4e4e4" stroke="#a01020" stroke-width="1"/><path d="M693.6 688 V690.4 H695.6" fill="none" stroke="#a01020" stroke-width="0.9"/>
<!-- zoom -->
<circle cx="714" cy="664.6" r="4.4" fill="url(#gLens)" stroke="#20208c" stroke-width="1.4"/><path d="M717.4 668.2 L722.4 673.8" stroke="#20208c" stroke-width="2.6"/><path d="M717.6 668 L722 673" stroke="#7890e0" stroke-width="0.9"/>
<!-- zoom all -->
<g fill="none" stroke="#a01828" stroke-width="1.1"><rect x="734.5" y="660.5" width="12" height="10"/><path d="M740.5 660.5 V670.5 M734.5 665.5 H746.5"/></g>
<circle cx="735.3" cy="668.6" r="3.5" fill="url(#gLens)" stroke="#20208c" stroke-width="1.3"/><path d="M738 671.4 L741.4 675" stroke="#20208c" stroke-width="2.2"/>
<!-- zoom extents -->
<g fill="none" stroke="#000" stroke-width="1.2"><path d="M754.5 664 V660.8 H758 M766 660.8 H769.5 V664 M754.5 671 V674.4 H758 M766 674.4 H769.5 V671"/></g>
<path d="M757 664 L760 661.5 H768 V669.5 L765 672" fill="#b8b8c8" stroke="#20208c" stroke-width="1"/><rect x="757" y="664" width="8" height="8" fill="#c4c4d0" stroke="#20208c" stroke-width="1.1"/><path d="M765 664 L768 661.5" stroke="#20208c"/>
<use href="#fl" x="770" y="674.5"/>
<!-- zoom extents all -->
<g fill="none" stroke="#a01828" stroke-width="1.1"><rect x="781.5" y="660.5" width="11.5" height="10"/><path d="M787.3 660.5 V670.5 M781.5 665.5 H793"/></g>
<path d="M777.8 667 L780 665 H786.5 V672 L784.6 674" fill="#c4c4d0" stroke="#20208c" stroke-width="1"/><rect x="777.8" y="667" width="6.8" height="7" fill="#c8c8d4" stroke="#20208c" stroke-width="1.1"/><path d="M784.6 667 L786.5 665" stroke="#20208c"/>
<use href="#fl" x="793.5" y="674.5"/>
<!-- region zoom -->
<rect x="708.8" y="683" width="14.5" height="13" fill="#dcdcdc" stroke="#000" stroke-width="1.1" stroke-dasharray="2 1.2"/>
<circle cx="714" cy="687.6" r="3.8" fill="url(#gLens)" stroke="#20208c" stroke-width="1.3"/><path d="M716.8 690.6 L720.6 694.4" stroke="#20208c" stroke-width="2.2"/>
<use href="#fl" x="723.5" y="696.5"/>
<!-- walk through -->
<g fill="#e8e8e8" stroke="#000" stroke-width="1"><ellipse cx="735" cy="687.3" rx="2.6" ry="4.3"/><ellipse cx="735" cy="695" rx="2.4" ry="1.8"/><ellipse cx="742.3" cy="687.3" rx="2.6" ry="4.3"/><ellipse cx="742.3" cy="695" rx="2.4" ry="1.8"/></g>
<use href="#fl" x="746" y="696.5"/>
<!-- arc rotate -->
<circle cx="760.8" cy="690.6" r="5.3" fill="none" stroke="#000" stroke-width="0.9"/>
<g stroke="#20208c" stroke-width="1.1" fill="none"><path d="M760.8 690.6 V684 M760.8 690.6 H768 M760.8 690.6 L755.5 696"/></g>
<path d="M760.8 682.2 L762.6 685.4 H759 Z M770 690.6 L766.8 692.4 V688.8 Z M754 697.4 L755 694 L757.4 696.4 Z" fill="#000"/>
<use href="#fl" x="770" y="696.5"/>
<!-- maximize toggle -->
<rect x="785.5" y="689" width="7.2" height="7.2" fill="none" stroke="#000" stroke-width="1.2"/>
<rect x="778.3" y="682.8" width="11.2" height="10.2" fill="#c5c5c5" stroke="#20208c" stroke-width="1.3"/>
<path d="M781.5 685.6 L786.6 690.6" stroke="#000" stroke-width="1" stroke-dasharray="1.3 1"/><path d="M780.6 684.8 H783.6 L780.6 687.8 Z" fill="#000"/>
</svg>

<div class="sunk" style="left:604px;top:681px;width:64px;height:20px;background:#e2e2e2;border-color:#202020 #f4f4f4 #f4f4f4 #202020;box-shadow:inset 1px 1px 0 #808080;"></div>

<svg width="802" height="705" style="left:0;top:0;pointer-events:none" font-family="Liberation Sans, sans-serif"><text x="62.3" y="621.6" textLength="35.4" lengthAdjust="spacingAndGlyphs" font-size="12" fill="#000" >0 / 100</text><clipPath id="cpN"><rect x="49" y="660" width="46" height="18"/></clipPath><text x="53.4" y="672.8" textLength="45.8" lengthAdjust="spacingAndGlyphs" font-size="12" fill="#000" clip-path="url(#cpN)">None Sel</text><text x="151.5" y="673.1" textLength="9.7" lengthAdjust="spacingAndGlyphs" font-size="12" fill="#000" >X:</text><text x="166" y="673.1" textLength="35.7" lengthAdjust="spacingAndGlyphs" font-size="12" fill="#868686" >1,939m</text><text x="233.7" y="673.1" textLength="9.5" lengthAdjust="spacingAndGlyphs" font-size="12" fill="#000" >Y:</text><text x="248.3" y="673.1" textLength="35.9" lengthAdjust="spacingAndGlyphs" font-size="12" fill="#868686" >1,699m</text><text x="315.8" y="673.1" textLength="9.4" lengthAdjust="spacingAndGlyphs" font-size="12" fill="#000" >Z:</text><text x="330" y="673.1" textLength="21.7" lengthAdjust="spacingAndGlyphs" font-size="12" fill="#868686" >0,0m</text><text x="53.3" y="697.2" textLength="197.9" lengthAdjust="spacingAndGlyphs" font-size="12" fill="#000" >Click and drag to select and move objects</text><text x="408.8" y="671.9" textLength="43.5" lengthAdjust="spacingAndGlyphs" font-size="12" fill="#000" >Auto Key</text><text x="412.1" y="693.8" textLength="37.5" lengthAdjust="spacingAndGlyphs" font-size="12" fill="#000" >Set Key</text><text x="461.5" y="671.9" textLength="41.6" lengthAdjust="spacingAndGlyphs" font-size="12" fill="#000" >Selected</text><text x="500.5" y="693.8" textLength="56.1" lengthAdjust="spacingAndGlyphs" font-size="12" fill="#000" >Key Filters...</text><text x="608.6" y="693.9" textLength="5.3" lengthAdjust="spacingAndGlyphs" font-size="12" fill="#000" >0</text><text x="630.1" y="134" textLength="56.6" lengthAdjust="spacingAndGlyphs" font-size="12" fill="#000" >Modifier List</text><text x="7.7" y="74.1" textLength="19.1" lengthAdjust="spacingAndGlyphs" font-size="12" fill="#dadada" >Top</text><text x="317.5" y="73.8" textLength="23.6" lengthAdjust="spacingAndGlyphs" font-size="12" fill="#dadada" >Front</text><text x="7.6" y="348.7" textLength="24.7" lengthAdjust="spacingAndGlyphs" font-size="12" fill="#dadada" >Right</text><text x="317.1" y="348.5" textLength="56.0" lengthAdjust="spacingAndGlyphs" font-size="12" fill="#dadada" >Perspective</text></svg>
</body></html>
